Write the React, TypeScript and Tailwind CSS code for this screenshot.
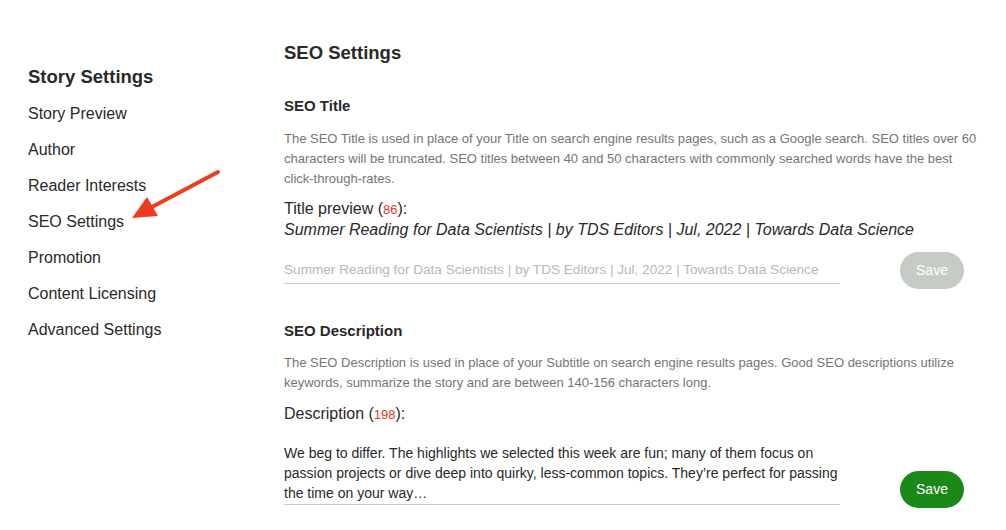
import React from "react";

const navItems = [
  "Story Preview",
  "Author",
  "Reader Interests",
  "SEO Settings",
  "Promotion",
  "Content Licensing",
  "Advanced Settings",
];

function PointerArrow() {
  return (
    <svg
      className="absolute left-0 top-0 pointer-events-none"
      width="240"
      height="240"
      viewBox="0 0 240 240"
    >
      <line x1="218" y1="172" x2="152" y2="207" stroke="#f13c1c" strokeWidth="4" strokeLinecap="round" />
      <polygon points="132,218 147,197 158,216" fill="#f13c1c" />
    </svg>
  );
}

export default function App() {
  return (
    <div
      className="relative flex w-[1006px] h-[530px] bg-white text-[#292929] overflow-hidden"
      style={{ fontFamily: '"Liberation Sans", Arial, sans-serif' }}
    >
      {/* Sidebar */}
      <aside className="w-[284px] shrink-0 pl-[28px] pt-[63px]">
        <h2 className="text-[18.5px] leading-[28px] font-semibold mb-[5px]">Story Settings</h2>
        <nav className="flex flex-col">
          {navItems.map((item) => (
            <a key={item} className="text-[16px] leading-[36px] text-[#292929]">
              {item}
            </a>
          ))}
        </nav>
      </aside>
      <PointerArrow />

      {/* Main */}
      <main className="flex-1 pt-[39px]">
        <h1 className="text-[18.5px] leading-[28px] font-semibold">SEO Settings</h1>

        <h3 className="mt-[27px] text-[15px] leading-[24px] font-semibold">SEO Title</h3>
        <p className="mt-[11px] w-[700px] text-[13px] leading-[20px] text-[#757575]">
          The SEO Title is used in place of your Title on search engine results pages, such as a Google search. SEO titles over 60 characters will be truncated. SEO titles between 40 and 50 characters with commonly searched words have the best click-through-rates.
        </p>
        <div className="mt-[10px] text-[16px] leading-[20px]">
          Title preview (<span className="text-[#e4361c] text-[13px]">86</span>):
        </div>
        <div className="text-[16px] leading-[20px] italic">
          Summer Reading for Data Scientists | by TDS Editors | Jul, 2022 | Towards Data Science
        </div>
        <div className="mt-[12px] flex items-center gap-[60px]">
          <div className="w-[556px] h-[26px] border-b border-[#c8c8c8] flex items-center text-[13.6px] text-[#b7b7b7] whitespace-nowrap">
            Summer Reading for Data Scientists | by TDS Editors | Jul, 2022 | Towards Data Science
          </div>
          <button className="w-[64px] h-[37px] rounded-full bg-[#c5cbc5] text-white text-[14px]">Save</button>
        </div>

        <h3 className="mt-[30px] text-[15px] leading-[24px] font-semibold">SEO Description</h3>
        <p className="mt-[10px] w-[700px] text-[13px] leading-[20px] text-[#757575]">
          The SEO Description is used in place of your Subtitle on search engine results pages. Good SEO descriptions utilize keywords, summarize the story and are between 140-156 characters long.
        </p>
        <div className="mt-[11px] text-[16px] leading-[20px]">
          Description (<span className="text-[#e4361c] text-[13px]">198</span>):
        </div>
        <div className="mt-[18px] flex items-end gap-[60px]">
          <div className="w-[556px] mb-[3px] pb-[1px] border-b border-[#c8c8c8] text-[14px] leading-[20px] text-[#292929]">
            We beg to differ. The highlights we selected this week are fun; many of them focus on
            <br />
            passion projects or dive deep into quirky, less-common topics. They’re perfect for passing
            <br />
            the time on your way…
          </div>
          <button className="w-[64px] h-[37px] rounded-full bg-[#1a8917] text-white text-[14px]">Save</button>
        </div>
      </main>
    </div>
  );
}
